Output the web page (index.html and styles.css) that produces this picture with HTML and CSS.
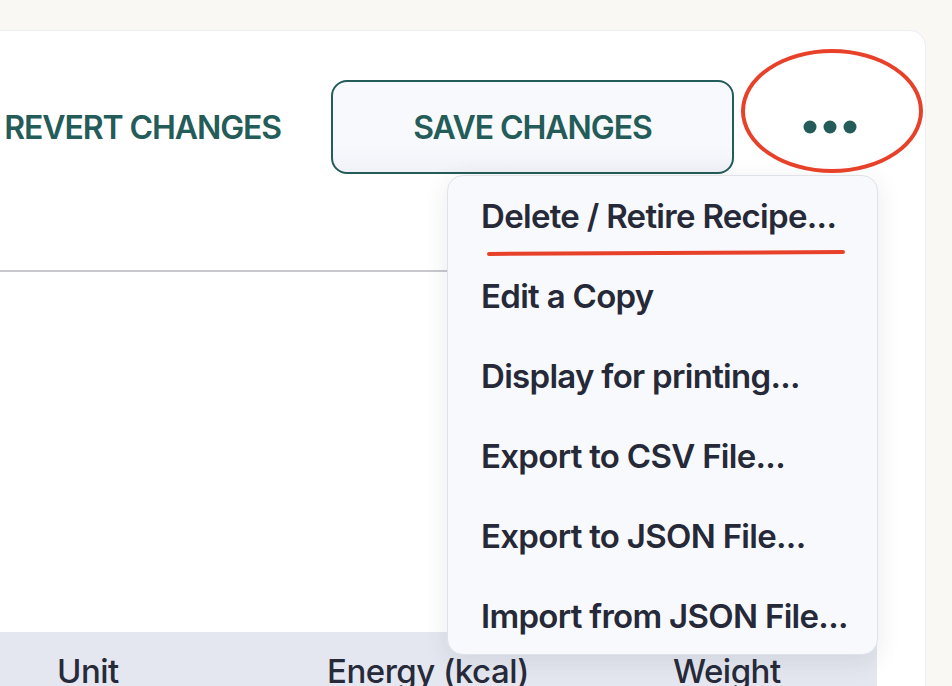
FILE: index.html
```html
<!DOCTYPE html>
<html>
<head>
<meta charset="utf-8">
<link rel="stylesheet" href="styles.css">
</head>
<body>
<div class="page">
  <div class="card">
    <div class="toolbar">
      <button class="btn-text">REVERT CHANGES</button>
      <button class="btn-outline">SAVE CHANGES</button>
      <button class="btn-more" aria-label="More">
        <svg width="54" height="14" viewBox="0 0 54 14"><circle cx="7" cy="7" r="6.5" fill="#235c59"/><circle cx="27" cy="7" r="6.5" fill="#235c59"/><circle cx="47" cy="7" r="6.5" fill="#235c59"/></svg>
      </button>
    </div>
    <div class="divider"></div>
    <div class="spacer"></div>
    <div class="table-head">
      <div class="th">Unit</div>
      <div class="th">Energy (kcal)</div>
      <div class="th">Weight</div>
    </div>
  </div>
  <div class="menu">
    <div class="menu-item">Delete / Retire Recipe...</div>
    <div class="menu-item">Edit a Copy</div>
    <div class="menu-item">Display for printing...</div>
    <div class="menu-item">Export to CSV File...</div>
    <div class="menu-item">Export to JSON File...</div>
    <div class="menu-item">Import from JSON File...</div>
  </div>
  <div class="annot-ellipse"></div>
  <div class="annot-underline"></div>
</div>
</body>
</html>
```

FILE: styles.css
```css
html, body {
  margin: 0;
  padding: 0;
  background: #faf8f3;
  overflow: hidden;
  height: 686px;
}
.page {
  position: relative;
  width: 952px;
  height: 686px;
  overflow: hidden;
  padding-top: 30px;
  box-sizing: border-box;
  font-family: Inter, "Noto Sans", sans-serif;
}
.card {
  margin: 0 26px 0 -30px;
  background: #ffffff;
  border: 1px solid #eceef5;
  border-radius: 16px;
  height: 700px;
  display: flex;
  flex-direction: column;
}
.toolbar {
  display: flex;
  align-items: center;
  justify-content: flex-end;
  padding-top: 49px;
  height: 94px;
}
button {
  font-family: Inter, "Noto Sans", sans-serif;
  cursor: pointer;
}
.btn-text {
  border: 0;
  background: transparent;
  color: #235c59;
  font-size: 32px;
  font-weight: 600;
  letter-spacing: -1.1px;
  padding: 0;
  margin-right: 50px;
  height: 94px;
}
.btn-outline {
  width: 403px;
  height: 94px;
  border: 2px solid #235c59;
  border-radius: 16px;
  background: linear-gradient(180deg, #f8f9fd 70%, #f1f2f7 100%);
  color: #235c59;
  font-size: 32px;
  font-weight: 600;
  letter-spacing: -1.05px;
  padding: 0;
}
.btn-more {
  width: 191px;
  height: 94px;
  border: 0;
  background: transparent;
  display: flex;
  align-items: center;
  justify-content: center;
  padding: 0;
}
.divider {
  margin-top: 96px;
  height: 2px;
  background: #c8c8cd;
  margin-right: 400px;
}
.spacer {
  height: 360px;
}
.table-head {
  background: #e4e7ef;
  height: 60px;
  margin-right: 48px;
  display: grid;
  grid-template-columns: 270px 346px auto;
  align-items: start;
  padding: 19px 0 0 86px;
  box-sizing: border-box;
  color: #272a39;
  font-size: 33px;
  font-weight: 500;
  letter-spacing: -0.5px;
}
.menu {
  position: absolute;
  left: 447px;
  top: 175px;
  width: 431px;
  height: 480px;
  box-sizing: border-box;
  background: #f8f9fd;
  border: 1px solid #e0e2ea;
  border-radius: 16px;
  box-shadow: 0 6px 24px rgba(40, 45, 70, 0.10);
  padding: 0 0 0 33px;
}
.menu-item {
  height: 80px;
  line-height: 80px;
  font-size: 33px;
  font-weight: 600;
  color: #262938;
  letter-spacing: -0.7px;
  white-space: nowrap;
}
.annot-ellipse {
  position: absolute;
  left: 741px;
  top: 49px;
  width: 182px;
  height: 124px;
  box-sizing: border-box;
  border: 4px solid #e8412a;
  border-radius: 50%;
}
.annot-underline {
  position: absolute;
  left: 487px;
  top: 251px;
  width: 358px;
  height: 4px;
  background: #e8412a;
  border-radius: 2px;
  transform: rotate(-0.3deg);
}
```
